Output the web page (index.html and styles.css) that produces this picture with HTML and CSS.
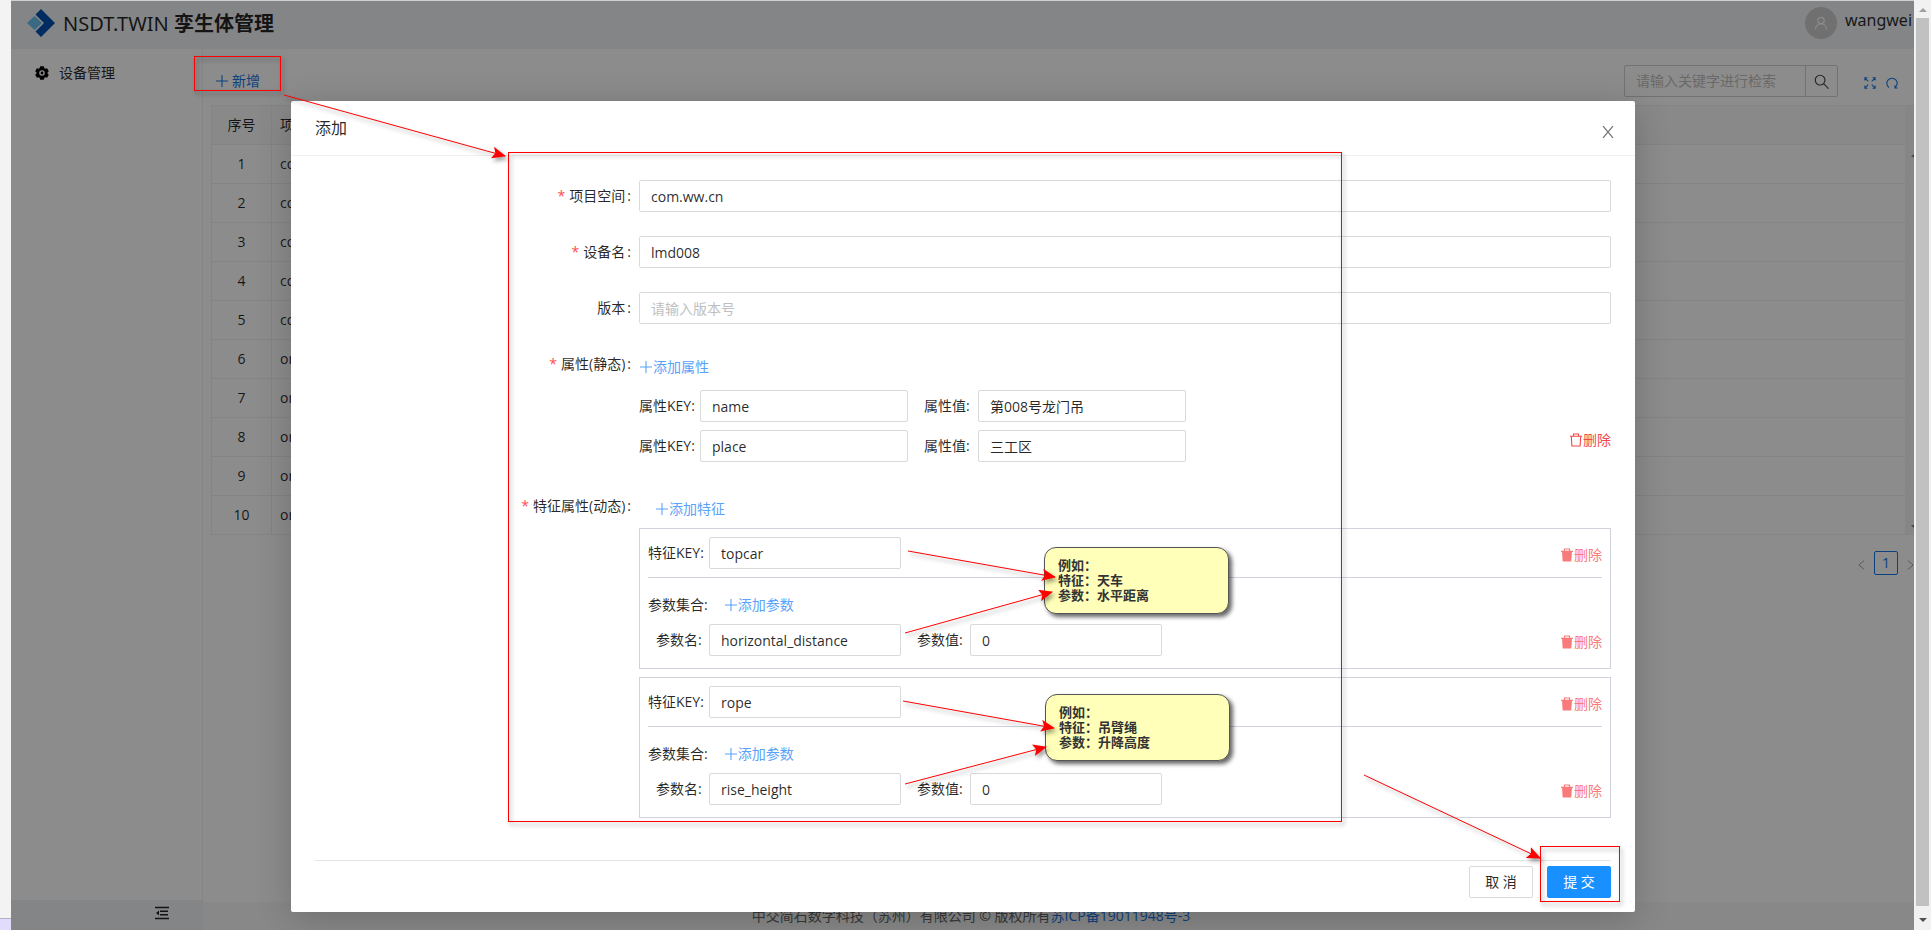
FILE: index.html
```html
<!DOCTYPE html>
<html lang="zh-CN">
<head>
<meta charset="utf-8">
<title>NSDT.TWIN 孪生体管理</title>
<link rel="stylesheet" href="styles.css">
</head>
<body>
<svg class="defs" aria-hidden="true">
  <symbol id="plus" viewBox="0 0 14 14"><path d="M7 1v12M1 7h12" fill="none" stroke="currentColor" stroke-width="1.1"/></symbol>
  <symbol id="bin" viewBox="0 0 14 14"><path d="M4.5 3V1h5v2M1 3.300h12M2.300 3.500l.6 9.500h8.200l.6-9.500" fill="none" stroke="currentColor" stroke-width="1.100"/></symbol>
  <symbol id="bin-fill" viewBox="0 0 14 14"><path d="M4.500 3V1h5v2M1 3.300h12" fill="none" stroke="currentColor" stroke-width="1.200"/><path d="M2 3h10l-.7 10.500H2.700z" fill="currentColor"/></symbol>
</svg>

<div class="gutter"><span class="gutter-foot"></span></div>

<div class="app">
  <header class="topbar">
    <svg class="logo" viewBox="0 0 28 28"><path d="M14 0l14 14-14 14-5.500-5.500L17 14 8.500 5.500z" fill="#0050b3"/><path d="M7.500 7l7.500 7-7.500 7L0 14z" fill="#69c0ee"/></svg>
    <h1 class="brand">NSDT.TWIN <b>孪生体管理</b></h1>
    <span class="avatar"><svg viewBox="0 0 14 14"><circle cx="7" cy="4.500" r="3.200"/><path d="M1.500 13.500c0-3.500 2.500-5.600 5.500-5.600s5.500 2.100 5.500 5.600"/></svg></span>
    <span class="user">wangwei</span>
  </header>
  <div class="body">
    <aside class="side">
      <nav class="menu">
        <a class="menu-item" href="#"><svg viewBox="0 0 14 14"><path fill-rule="evenodd" d="M5.200.3h3.600l.5 1.800 1 .6 1.800-.5 1.700 3-1.300 1.300v1l1.300 1.300-1.700 3-1.800-.5-1 .6-.5 1.800H5.200l-.5-1.800-1-.6-1.800.5-1.700-3L1.500 7.500v-1L.2 5.200l1.700-3 1.800.5 1-.6zM7 4.200a2.800 2.800 0 1 0 0 5.600 2.800 2.800 0 0 0 0-5.600zM7 5.600a1.400 1.400 0 1 1 0 2.800 1.400 1.400 0 0 1 0-2.800z"/></svg>设备管理</a>
      </nav>
      <button class="fold" aria-label="收起菜单"><svg viewBox="0 0 14 14"><path d="M0 1.500h14M5 5.300h8M5 8.700h8M0 12.500h14" stroke="currentColor" stroke-width="1.400"/><path d="M4 4.500v5L1 7z" fill="currentColor"/></svg></button>
    </aside>
    <main class="main">
      <div class="toolbar">
        <button class="new"><svg><use href="#plus"/></svg>新增</button>
        <div class="search">
          <input type="text" aria-label="检索" placeholder="请输入关键字进行检索">
          <button aria-label="搜索"><svg viewBox="0 0 16 16"><circle cx="6.500" cy="6.500" r="5.200"/><path d="M10.500 10.500l5 5"/></svg></button>
        </div>
        <button class="tool" aria-label="全屏"><svg viewBox="0 0 14 14"><path d="M1 4V1h3M10 1h3v3M13 10v3h-3M4 13H1v-3M1 1l4 4M13 1L9 5M13 13L9 9M1 13l4-4"/></svg></button>
        <button class="tool" aria-label="刷新"><svg viewBox="0 0 14 14"><path d="M3.500 12.300a6 6 0 1 1 7 0M10.500 9.500v3.300h3"/></svg></button>
      </div>
      <div class="list">
        <table class="grid">
          <thead><tr><th class="no">序号</th><th>项目空间</th></tr></thead>
          <tbody>
            <tr><td>1</td><td>com.ww.cn</td></tr>
            <tr><td>2</td><td>com.ww.cn</td></tr>
            <tr><td>3</td><td>com.ww.cn</td></tr>
            <tr><td>4</td><td>com.ww.cn</td></tr>
            <tr><td>5</td><td>com.ww.cn</td></tr>
            <tr><td>6</td><td>org.ww.cn</td></tr>
            <tr><td>7</td><td>org.ww.cn</td></tr>
            <tr><td>8</td><td>org.ww.cn</td></tr>
            <tr><td>9</td><td>org.ww.cn</td></tr>
            <tr><td>10</td><td>org.ww.cn</td></tr>
          </tbody>
        </table>
        <div class="list-scroll"><i class="up"></i><i class="down"></i></div>
      </div>
      <div class="pager">
        <button class="arrow" aria-label="上一页"><svg viewBox="0 0 8 12"><path d="M7 1L1 6l6 5"/></svg></button>
        <button class="page">1</button>
        <button class="arrow" aria-label="下一页"><svg viewBox="0 0 8 12"><path d="M1 1l6 5-6 5"/></svg></button>
      </div>
      <footer class="foot">中交简石数字科技（苏州）有限公司 © 版权所有<a href="#">苏ICP备19011948号-3</a></footer>
    </main>
  </div>

  <div class="mask">
    <form class="modal" role="dialog" aria-label="添加">
      <div class="modal-head"><h2>添加</h2><button type="button" class="close" aria-label="关闭"><svg viewBox="0 0 12 12"><path d="M1 0l10 12M11 0L1 12"/></svg></button></div>
      <div class="modal-body">
        <div class="item"><label class="label req" for="space">项目空间</label><div class="ctl"><input id="space" value="com.ww.cn"></div></div>
        <div class="item"><label class="label req" for="dev">设备名</label><div class="ctl"><input id="dev" value="lmd008"></div></div>
        <div class="item"><label class="label" for="ver">版本</label><div class="ctl"><input id="ver" placeholder="请输入版本号"></div></div>
        <div class="item static"><span class="label req">属性(静态)</span>
          <div class="ctl">
            <button type="button" class="add"><svg><use href="#plus"/></svg>添加属性</button>
            <div class="attrs">
              <div class="pairs">
                <div class="pair"><label for="k1">属性KEY:</label><input id="k1" value="name"><label class="second" for="v1">属性值:</label><input id="v1" value="第008号龙门吊"></div>
                <div class="pair"><label for="k2">属性KEY:</label><input id="k2" value="place"><label class="second" for="v2">属性值:</label><input id="v2" value="三工区"></div>
              </div>
              <button type="button" class="del strong"><svg><use href="#bin"/></svg>删除</button>
            </div>
          </div>
        </div>
        <div class="item dynamic"><span class="label req">特征属性(动态)</span>
          <div class="ctl">
            <button type="button" class="add indent"><svg><use href="#plus"/></svg>添加特征</button>
            <section class="feature">
              <div class="feature-key"><label for="f1">特征KEY:</label><input id="f1" value="topcar"><button type="button" class="del"><svg><use href="#bin-fill"/></svg>删除</button></div>
              <div class="set"><span>参数集合:</span><button type="button" class="add"><svg><use href="#plus"/></svg>添加参数</button></div>
              <div class="param"><label for="p1">参数名:</label><input id="p1" value="horizontal_distance"><label class="second" for="q1">参数值:</label><input id="q1" value="0"><button type="button" class="del"><svg><use href="#bin-fill"/></svg>删除</button></div>
            </section>
            <section class="feature">
              <div class="feature-key"><label for="f2">特征KEY:</label><input id="f2" value="rope"><button type="button" class="del"><svg><use href="#bin-fill"/></svg>删除</button></div>
              <div class="set"><span>参数集合:</span><button type="button" class="add"><svg><use href="#plus"/></svg>添加参数</button></div>
              <div class="param"><label for="p2">参数名:</label><input id="p2" value="rise_height"><label class="second" for="q2">参数值:</label><input id="q2" value="0"><button type="button" class="del"><svg><use href="#bin-fill"/></svg>删除</button></div>
            </section>
          </div>
        </div>
        <div class="actions"><button type="button" class="btn">取 消</button><button type="button" class="btn primary">提 交</button></div>
      </div>
    </form>
  </div>
</div>

<div class="scrollbar"><i class="up"></i><span class="thumb"></span><i class="down"></i></div>

<div class="note note-a">例如：<br>特征：天车<br>参数：水平距离</div>
<div class="note note-b">例如：<br>特征：吊臂绳<br>参数：升降高度</div>
<svg class="marks" aria-hidden="true">
  <defs>
    <marker id="head" markerUnits="userSpaceOnUse" markerWidth="16" markerHeight="14" refX="13" refY="6" orient="auto"><path d="M0 0l14 6-14 6 3-6z" fill="#f00"/></marker>
  </defs>
  <g fill="none" stroke="#f00" stroke-width="1">
    <rect x="194.500" y="56.500" width="86" height="34"/>
    <rect x="508.500" y="152.500" width="833" height="669"/>
    <rect x="1540.500" y="846.500" width="79" height="55"/>
    <path d="M284 95L505 156" marker-end="url(#head)"/>
    <path d="M908 551l147 26" marker-end="url(#head)"/>
    <path d="M905 633l147-41" marker-end="url(#head)"/>
    <path d="M903 701l151 27" marker-end="url(#head)"/>
    <path d="M905 784l141-37" marker-end="url(#head)"/>
    <path d="M1364 775l176 83" marker-end="url(#head)"/>
  </g>
</svg>
</body>
</html>
```
FILE: styles.css
```css
* { box-sizing: border-box; }
body {
  margin: 0;
  display: flex;
  height: 100vh;
  overflow: hidden;
  position: relative;
  background: #f3f3f3;
  color: rgba(0, 0, 0, .85);
  font: 14px/22px "Open Sans", "Noto Sans CJK SC", sans-serif;
}
button, input { font: inherit; color: inherit; margin: 0; }
button { background: none; border: 0; padding: 0; white-space: nowrap; }
a { text-decoration: none; color: inherit; }
svg { display: block; flex: none; }
.defs { position: absolute; width: 0; height: 0; }

.gutter { flex: 0 0 11px; display: flex; align-items: flex-end; }
.gutter-foot { flex: 1; height: 12px; background: #e2dcfc; border-top: 1px solid #b4b0c4; }

.app {
  flex: 1;
  min-width: 0;
  position: relative;
  display: flex;
  flex-direction: column;
  overflow: hidden;
  background: #fff;
  border-top: 1px solid #ccd0d0;
}
.topbar { display: flex; height: 48px; padding-left: 16px; background: #f0f2f5; font-family: "Noto Sans", "Noto Sans CJK SC", sans-serif; }
.logo { width: 28px; height: 28px; margin-top: 8px; }
.brand { margin: 8px 0 0 8px; font-size: 20px; font-weight: 400; line-height: 30px; }
.avatar {
  width: 32px; height: 32px; margin: 6px 8px 0 auto;
  display: grid; place-items: center;
  border-radius: 50%; background: #ccc;
}
.avatar svg { width: 14px; height: 14px; fill: none; stroke: #fff; stroke-width: 1.2; }
.user { flex: 0 0 69px; overflow: hidden; margin-top: 7px; font-size: 16px; line-height: 24px; }

.body { flex: 1; min-height: 0; display: flex; }
.side { width: 192px; display: flex; flex-direction: column; border-right: 1px solid #f0f0f0; }
.menu { flex: 1; padding: 13px 24px; }
.menu-item { display: flex; align-items: center; gap: 10px; }
.menu-item svg { width: 14px; height: 14px; }
.fold { height: 30px; display: flex; justify-content: flex-end; align-items: center; padding: 0 33px 4px 0; background: #f0f2f5; }
.fold svg { width: 14px; height: 14px; }

.main { flex: 1; min-width: 0; display: flex; flex-direction: column; }
.toolbar { display: flex; align-items: center; height: 56px; padding: 8px 16px 0 12px; color: #1677e6; }
.new { display: flex; align-items: center; gap: 3px; }
.new svg { width: 14px; height: 14px; }
.search { display: flex; width: 214px; height: 32px; margin: 0 26px 0 auto; border: 1px solid #d0d0d0; border-radius: 2px; color: #444; }
.search input { flex: 1; min-width: 0; border: 0; background: none; padding: 0 11px; }
.search button { width: 32px; border-left: 1px solid #d0d0d0; display: grid; place-items: center; }
.search svg { width: 15px; height: 15px; fill: none; stroke: currentColor; stroke-width: 1.2; }
.tool { padding-top: 4px; }
.tool + .tool { margin-left: 10px; }
.tool svg { width: 12px; height: 12px; fill: none; stroke: currentColor; stroke-width: 1.2; }
input::placeholder { color: #bfbfbf; opacity: 1; }

.list { display: flex; padding-left: 8px; }
.grid { flex: 1; border-collapse: collapse; table-layout: fixed; }
.grid th, .grid td { height: 39px; padding: 0 8px; border: 1px solid #f0f0f0; border-right: 0; font-weight: 400; text-align: left; }
.grid th { background: #fafafa; }
.grid th:first-child, .grid td:first-child { width: 60px; text-align: center; }
.list-scroll { width: 9px; display: flex; flex-direction: column; justify-content: space-between; padding: 48px 0 7px 6px; background: #f4f4f4; border-top: 1px solid #f0f0f0; }
.list-scroll i { width: 6px; border: 3px solid transparent; }
.list-scroll .up { border-bottom-color: #777; border-top: 0; }
.list-scroll .down { border-top-color: #777; border-bottom: 0; }

.pager { display: flex; justify-content: flex-end; align-items: center; gap: 9px; padding-top: 16px; }
.arrow svg { width: 7px; height: 12px; margin-top: 4px; fill: none; stroke: #999; }
.page { width: 24px; height: 24px; border: 1px solid #1677e6; border-radius: 2px; color: #1677e6; line-height: 20px; }
.foot { margin-top: auto; height: 28px; padding: 3px 175px 0 0; background: #f7f7f7; text-align: center; color: #666; }
.foot a { color: #1677e6; }

.mask { position: absolute; inset: 0; padding: 100px 279px 0 280px; background: rgba(0, 0, 0, .45); }
.modal { background: #fff; border-radius: 2px; box-shadow: 0 6px 36px rgba(0, 0, 0, .2); }
.modal-head { display: flex; justify-content: space-between; align-items: center; height: 55px; padding: 0 21px 0 24px; border-bottom: 1px solid #f0f0f0; }
.modal-head h2 { margin: 0; font-size: 16px; font-weight: 400; }
.close svg { width: 12px; height: 12px; margin-top: 8px; fill: none; stroke: #777; stroke-width: 1.2; }
.modal-body { padding: 24px 24px 14px; }

.item { display: flex; margin-bottom: 24px; }
.label { flex: 0 0 25%; padding-right: 8px; text-align: right; line-height: 32px; }
.label::after { content: ":"; margin-left: 2px; }
.req::before { content: "*"; margin-right: 4px; color: #ff4d4f; }
.ctl { flex: 1; min-width: 0; }
.ctl input { height: 32px; padding: 0 11px; border: 1px solid #d9d9d9; border-radius: 2px; background: #fff; }
.item > .ctl > input { display: block; width: 100%; }
.add { display: flex; align-items: center; color: #5aa2fa; }
.add svg { width: 14px; height: 14px; }
.item > .ctl > .add { height: 38px; }
.item > .ctl > .indent { margin-left: 16px; }
.attrs { display: flex; justify-content: space-between; align-items: center; padding-top: 4px; }
.pairs { display: grid; gap: 8px; }
.pair, .param, .feature-key { display: flex; align-items: center; }
.pair label { width: 61px; }
.pair .second { width: 54px; margin-left: 16px; }
.pair input { width: 208px; }
.static { margin-bottom: 28px; }
.del { display: flex; align-items: center; color: #f97a7a; }
.del svg { width: 14px; height: 14px; }
.strong { color: #f0484a; margin-top: 28px; }

.dynamic { margin-bottom: 42px; }
.feature { border: 1px solid #d0d2dc; padding: 8px 8px 12px; margin-bottom: 8px; }
.feature:last-child { margin-bottom: 0; }
.feature input { width: 192px; }
.feature .del { margin: 4px 0 0 auto; }
.feature-key { padding-bottom: 8px; border-bottom: 1px solid #d0d2dc; }
.feature-key label { width: 61px; }
.set { display: flex; align-items: center; gap: 16px; padding: 16px 0 8px; }
.param { padding-left: 8px; }
.param label { width: 53px; }
.param .second { margin-left: 16px; }

.actions { display: flex; justify-content: flex-end; gap: 14px; padding-top: 5px; border-top: 1px solid #e4e4e4; }
.btn { width: 64px; height: 32px; border: 1px solid #d9d9d9; border-radius: 2px; }
.primary { background: #1890ff; border-color: #1890ff; color: #fff; }

.scrollbar { width: 17px; display: flex; flex-direction: column; align-items: center; padding: 8px 0 8px; gap: 6px; background: #f1f1f1; }
.scrollbar i { border: 4px solid transparent; }
.scrollbar .up { border-top: 0; border-bottom-color: #a0a0a0; }
.scrollbar .down { margin-top: 6px; border-bottom: 0; border-top-color: #505050; }
.thumb { flex: 1; width: 13px; background: #c1c1c1; }

.marks { position: absolute; inset: 0; width: 100%; height: 100%; overflow: hidden; pointer-events: none; filter: drop-shadow(2px 3px 2px rgba(0, 0, 0, .4)); }
.note {
  position: absolute;
  width: 185px;
  padding: 9px 13px 11px;
  border: 1px solid #555;
  border-radius: 12px;
  background: #ffffb9;
  box-shadow: 3px 3px 4px rgba(0, 0, 0, .6);
  color: #333;
  font: bold 13px/15px "Noto Sans CJK SC", sans-serif;
}
.note-a { left: 1044px; top: 547px; }
.note-b { left: 1045px; top: 694px; }
```
